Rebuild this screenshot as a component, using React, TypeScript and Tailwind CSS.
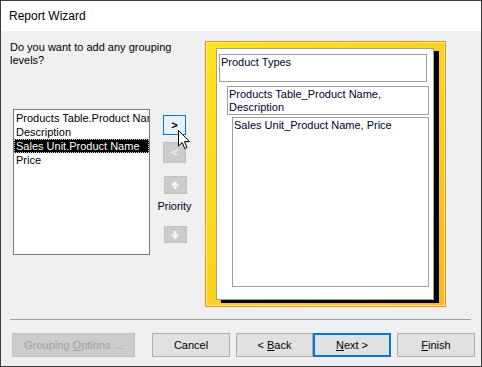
import React from "react";

const font = { fontFamily: '"Liberation Sans", Arial, sans-serif' };

const UpArrow: React.FC<{ down?: boolean }> = ({ down }) => (
  <svg width="10" height="10" viewBox="0 0 10 10" className={down ? "rotate-180" : ""}>
    <path d="M5 1 L9.5 5.5 L6.5 5.5 L6.5 9 L3.5 9 L3.5 5.5 L0.5 5.5 Z" fill="#f4f4f4" />
  </svg>
);

const Cursor: React.FC = () => (
  <svg width="13" height="20" viewBox="0 0 13 20" className="absolute left-[177px] top-[129px]">
    <path d="M0.5 0.5 L0.5 16 L4.2 12.5 L6.8 18.6 L9 17.6 L6.5 11.6 L11.5 11.6 Z" fill="#fff" stroke="#000" strokeWidth="1" strokeLinejoin="round" />
  </svg>
);

const listItems = ["Products Table.Product Name", "Description", "Sales Unit.Product Name", "Price"];

export default function App() {
  return (
    <div className="relative w-[482px] h-[367px] border border-[#3c3c3c] flex flex-col text-[11px] leading-[13px] text-black" style={font}>
      {/* title bar */}
      <div className="h-[30px] bg-white flex items-center pl-[8px] text-[12px]">Report Wizard</div>

      <div className="flex-1 bg-[#f0f0f0] flex flex-col">
        <div className="flex pt-[10px]">
          {/* left side */}
          <div className="w-[204px] pl-[9px]">
            <div>
              Do you want to add any grouping
              <br />
              levels?
            </div>
            <div className="flex mt-[42px]">
              <div className="ml-[3px] w-[137px] h-[146px] bg-white border border-[#7a7a7a] overflow-hidden pt-[1px]">
                {listItems.map((item, i) => (
                  <div
                    key={item}
                    className={
                      i === 2
                        ? "h-[14px] pl-[1px] bg-black text-white border border-dotted border-[#cfcfcf] leading-[12px] whitespace-nowrap"
                        : "h-[14px] pl-[2px] leading-[14px] whitespace-nowrap"
                    }
                  >
                    {item}
                  </div>
                ))}
              </div>

              {/* arrow buttons */}
              <div className="ml-[13px] w-[23px] flex flex-col items-center mt-[6px]">
                <div className="w-[23px] h-[20px] bg-[#e5f1fb] border border-[#0078d7] flex items-center justify-center font-bold">&gt;</div>
                <div className="mt-[7px] w-[23px] h-[21px] bg-[#cccccc] border border-[#bfbfbf] flex items-center justify-center text-[#f2f2f2] font-bold">&lt;</div>
                <div className="mt-[13px] ml-[1px] w-[23px] h-[18px] bg-[#cccccc] border border-[#bfbfbf] flex items-center justify-center">
                  <UpArrow />
                </div>
                <div className="mt-[6px] whitespace-nowrap text-[#000020]">Priority</div>
                <div className="mt-[13px] ml-[1px] w-[23px] h-[17px] bg-[#cccccc] border border-[#bfbfbf] flex items-center justify-center">
                  <UpArrow down />
                </div>
              </div>
            </div>
          </div>

          {/* preview */}
          <div className="w-[241px] h-[266px] border border-[#ff8c00] bg-linear-to-br from-[#ffe51c] via-[#fdd21d] to-[#f9ba1c] shadow-[inset_0_0_0_1px_#ffeaa0] pl-[10px] pt-[6px]">
            <div className="w-[218px] h-[252px] bg-white border border-[#a0a0a0] shadow-[5px_3px_0_#000] flex flex-col text-[#000030]">
              <div className="ml-[2px] mt-[5px] w-[208px] h-[28px] border border-[#a0a0a0] pl-[1px] pt-[1px]">Product Types</div>
              <div className="ml-[10px] mt-[4px] w-[202px] h-[29px] border border-[#a0a0a0] pl-[1px] pt-[1px]">
                Products Table_Product Name,
                <br />
                Description
              </div>
              <div className="ml-[15px] mt-[2px] w-[197px] h-[170px] border border-[#a0a0a0] pl-[1px] pt-[1px]">Sales Unit_Product Name, Price</div>
            </div>
          </div>
        </div>

        {/* separator */}
        <div className="ml-[9px] mt-[12px] w-[461px] h-px bg-[#a0a0a0]" />

        {/* bottom buttons */}
        <div className="flex mt-[13px] ml-[11px] h-[24px]">
          <div className="w-[123px] bg-[#cccccc] border border-[#bfbfbf] flex items-center justify-center text-[#a0a0a0]">
            <span>
              Grouping <span className="underline">O</span>ptions ...
            </span>
          </div>
          <div className="ml-[17px] w-[78px] bg-[#e1e1e1] border border-[#adadad] flex items-center justify-center">Cancel</div>
          <div className="ml-[6px] w-[77px] bg-[#e1e1e1] border border-[#adadad] flex items-center justify-center">
            <span>
              &lt; <span className="underline">B</span>ack
            </span>
          </div>
          <div className="w-[78px] bg-[#e1e1e1] border-2 border-[#0078d7] flex items-center justify-center">
            <span>
              <span className="underline">N</span>ext &gt;
            </span>
          </div>
          <div className="ml-[6px] w-[78px] bg-[#e1e1e1] border border-[#adadad] flex items-center justify-center">
            <span>
              <span className="underline">F</span>inish
            </span>
          </div>
        </div>
      </div>

      <Cursor />
    </div>
  );
}
